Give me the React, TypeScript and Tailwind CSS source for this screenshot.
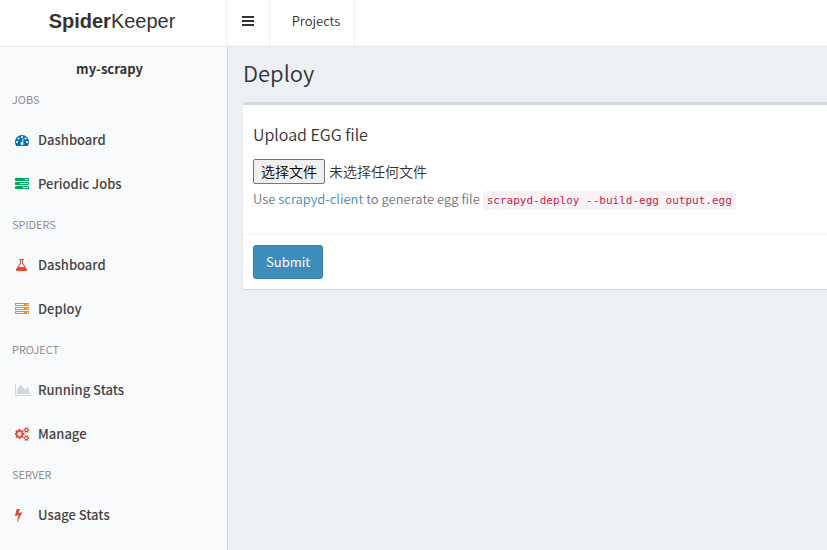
import { useRef, useState } from "react";
import type { ReactNode } from "react";

interface IconDef {
  viewBox: string;
  size: string;
  path: string;
}

interface NavItem {
  label: string;
  icon: IconDef;
  color: string;
}

const SMALL_COG =
  "v140q0 16-149 31-12 27-30 52 51 113 51 138 0 4-4 7-122 71-124 71-8 0-46-47t-52-68q-20 2-30 2t-30-2q-14 21-52 68t-46 47q-2 0-124-71-4-3-4-7 0-25 51-138-18-25-30-52-149-15-149-31v-140q0-16 149-31 13-29 30-52-51-113-51-138 0-4 4-7 4-2 35-20t59-34 30-16q8 0 46 46.5t52 67.5q20-2 30-2t30 2q51-71 92-112l6-2q4 0 124 70 4 3 4 7 0 25-51 138 17 23 30 52 149 15 149 31z";

const ICONS: Record<string, IconDef> = {
  dashboard: {
    viewBox: "0 0 1792 1792",
    size: "w-[14px]",
    path: "M384 1152q0-53-37.5-90.5t-90.5-37.5-90.5 37.5-37.5 90.5 37.5 90.5 90.5 37.5 90.5-37.5 37.5-90.5zm192-448q0-53-37.5-90.5t-90.5-37.5-90.5 37.5-37.5 90.5 37.5 90.5 90.5 37.5 90.5-37.5 37.5-90.5zm428 481l101-382q6-26-7.5-48.5t-38.5-29.5-48 6.5-30 39.5l-101 382q-60 5-107 43.5t-63 98.5q-20 77 20 146t117 89 146-20 89-117q16-60-6-117t-72-91zm660-33q0-53-37.5-90.5t-90.5-37.5-90.5 37.5-37.5 90.5 37.5 90.5 90.5 37.5 90.5-37.5 37.5-90.5zm-640-640q0-53-37.5-90.5t-90.5-37.5-90.5 37.5-37.5 90.5 37.5 90.5 90.5 37.5 90.5-37.5 37.5-90.5zm448 192q0-53-37.5-90.5t-90.5-37.5-90.5 37.5-37.5 90.5 37.5 90.5 90.5 37.5 90.5-37.5 37.5-90.5zm320 448q0 261-141 483-19 29-54 29h-1402q-35 0-54-29-141-221-141-483 0-182 71-348t191-286 286-191 348-71 348 71 286 191 191 286 71 348z",
  },
  tasks: {
    viewBox: "0 0 1792 1792",
    size: "w-[14px]",
    path: "M1024 1408h640v-128h-640v128zm-384-512h1024v-128h-1024v128zm640-512h384v-128h-384v128zm512 832v256q0 26-19 45t-45 19h-1664q-26 0-45-19t-19-45v-256q0-26 19-45t45-19h1664q26 0 45 19t19 45zm0-512v256q0 26-19 45t-45 19h-1664q-26 0-45-19t-19-45v-256q0-26 19-45t45-19h1664q26 0 45 19t19 45zm0-512v256q0 26-19 45t-45 19h-1664q-26 0-45-19t-19-45v-256q0-26 19-45t45-19h1664q26 0 45 19t19 45z",
  },
  flask: {
    viewBox: "64 0 1664 1792",
    size: "w-[13px]",
    path: "M1591 1448q56 89 21.5 152.5t-140.5 63.5h-1152q-106 0-140.5-63.5t21.5-152.5l503-793v-399h-64q-26 0-45-19t-19-45 19-45 45-19h512q26 0 45 19t19 45-19 45-45 19h-64v399zm-779-725l-272 429h712l-272-429-20-31v-436h-128v436z",
  },
  server: {
    viewBox: "0 0 1792 1792",
    size: "w-[14px]",
    path: "M128 1408h1024v-128h-1024v128zm0-512h1024v-128h-1024v128zm1568 448q0-40-28-68t-68-28-68 28-28 68 28 68 68 28 68-28 28-68zm-1568-960h1024v-128h-1024v128zm1568 448q0-40-28-68t-68-28-68 28-28 68 28 68 68 28 68-28 28-68zm0-512q0-40-28-68t-68-28-68 28-28 68 28 68 68 28 68-28 28-68zm96 832v384h-1792v-384h1792zm0-512v384h-1792v-384h1792zm0-512v384h-1792v-384h1792z",
  },
  areaChart: {
    viewBox: "0 0 2048 1792",
    size: "w-[16px]",
    path: "M2048 1536v128h-2048v-1536h128v1408h1920zm-384-1024l256 896h-1664v-576l448-576 576 576z",
  },
  cogs: {
    viewBox: "0 0 1920 1792",
    size: "w-[15px]",
    path:
      "M832 896q0-106-75-181t-181-75-181 75-75 181 75 181 181 75 181-75 75-181zm768 512q0-52-38-90t-90-38-90 38-38 90q0 53 37.5 90.5t90.5 37.5 90.5-37.5 37.5-90.5zm0-1024q0-52-38-90t-90-38-90 38-38 90q0 53 37.5 90.5t90.5 37.5 90.5-37.5 37.5-90.5zm-384 421v185q0 10-7 19.5t-16 10.5l-155 24q-11 35-32 76 34 48 90 115 7 11 7 20 0 12-7 19-23 30-82.5 89.5t-78.5 59.5q-11 0-21-7l-115-90q-37 19-77 31-11 108-23 155-7 24-30 24h-186q-11 0-20-7.5t-10-17.5l-23-153q-34-10-75-31l-118 89q-7 7-20 7-11 0-21-8-144-133-144-160 0-9 7-19 10-14 41-53t47-61q-23-44-35-82l-152-24q-10-1-17-9.5t-7-19.5v-185q0-10 7-19.5t16-10.5l155-24q11-35 32-76-34-48-90-115-7-11-7-20 0-12 7-20 22-30 82-89t79-59q11 0 21 7l115 90q34-18 77-32 11-108 23-154 7-24 30-24h186q11 0 20 7.5t10 17.5l23 153q34 10 75 31l118-89q8-7 20-7 11 0 21 8 144 133 144 160 0 8-7 19-12 16-42 54t-45 60q23 48 34 82l152 23q10 2 17 10.5t7 19.5z" +
      "m640 533" +
      SMALL_COG +
      "m0-1024" +
      SMALL_COG,
  },
  bolt: {
    viewBox: "448 0 896 1792",
    size: "w-[7px]",
    path: "M1333 566q18 20 7 44l-540 1157q-13 25-42 25-4 0-14-2-17-5-25.5-19t-4.5-30l197-808-406 101q-4 1-12 1-18 0-31-11-18-15-13-39l201-825q4-16 16-26t28-10h328q19 0 32 12.5t13 29.5q0 8-5 18l-171 463 396-98q8-2 12-2 19 0 34 15z",
  },
  bars: {
    viewBox: "0 0 1536 1792",
    size: "w-[12px]",
    path: "M0 256h1536v256h-1536zM0 768h1536v256h-1536zM0 1280h1536v256h-1536z",
  },
};

const NAV_SECTIONS: { title: string; items: NavItem[] }[] = [
  {
    title: "JOBS",
    items: [
      { label: "Dashboard", icon: ICONS.dashboard, color: "text-[#0073b7]" },
      { label: "Periodic Jobs", icon: ICONS.tasks, color: "text-[#00a65a]" },
    ],
  },
  {
    title: "SPIDERS",
    items: [
      { label: "Dashboard", icon: ICONS.flask, color: "text-[#dd4b39]" },
      { label: "Deploy", icon: ICONS.server, color: "text-[#ff851b]" },
    ],
  },
  {
    title: "PROJECT",
    items: [
      { label: "Running Stats", icon: ICONS.areaChart, color: "text-[#d2d6de]" },
      { label: "Manage", icon: ICONS.cogs, color: "text-[#dd4b39]" },
    ],
  },
  {
    title: "SERVER",
    items: [{ label: "Usage Stats", icon: ICONS.bolt, color: "text-[#dd4b39]" }],
  },
];

function Icon({ icon }: { icon: IconDef }) {
  return (
    <svg viewBox={icon.viewBox} className={`h-[14px] ${icon.size}`} fill="currentColor" aria-hidden="true">
      <path d={icon.path} />
    </svg>
  );
}

function Header() {
  return (
    <header className="flex h-[47px] border-b border-[#e4e6ea] bg-white">
      <a
        href="#"
        className="flex w-[227px] shrink-0 items-center justify-center border-r border-[#eeeeee] pb-1 pr-0.5 font-['Liberation_Sans',Arial,sans-serif] text-[20px] text-[#333333]"
      >
        <b>Spider</b>Keeper
      </a>
      <button
        type="button"
        aria-label="Toggle navigation"
        className="flex w-[43px] items-center justify-center border-r border-[#eeeeee] pb-1 text-[#333333]"
      >
        <Icon icon={ICONS.bars} />
      </button>
      <nav className="flex">
        <a href="#" className="flex w-[85px] items-center justify-center border-r border-[#eeeeee] pb-1 pl-2">
          Projects
        </a>
      </nav>
    </header>
  );
}

function Sidebar() {
  return (
    <aside className="w-[228px] shrink-0 border-r border-[#d2d6de] bg-[#f9fafc]">
      <p className="pt-3 pr-2 text-center font-bold leading-5 text-[#333333]">my-scrapy</p>
      <nav className="mt-0.5">
        {NAV_SECTIONS.map((section) => (
          <section key={section.title}>
            <h2 className="flex h-[37px] items-center pl-3 text-[11px] text-[#848484]">{section.title}</h2>
            <ul>
              {section.items.map((item) => (
                <li key={item.label}>
                  <a href="#" className="flex h-11 items-center pl-[15px] font-medium text-[#444444]">
                    <span className={`w-[23px] ${item.color}`}>
                      <Icon icon={item.icon} />
                    </span>
                    {item.label}
                  </a>
                </li>
              ))}
            </ul>
          </section>
        ))}
      </nav>
    </aside>
  );
}

function Box({ children, footer }: { children: ReactNode; footer: ReactNode }) {
  return (
    <div className="rounded-l-[3px] border-t-[3px] border-[#d2d6de] bg-white shadow-[0_1px_1px_rgba(0,0,0,0.1)]">
      <div className="px-[10px] pt-[19px] pb-[23px]">{children}</div>
      <div className="border-t border-[#f4f4f4] p-[10px]">{footer}</div>
    </div>
  );
}

export default function App() {
  const fileInput = useRef<HTMLInputElement>(null);
  const [fileName, setFileName] = useState("");

  return (
    <div className="flex min-h-screen flex-col bg-[#ecf0f5] font-['Noto_Sans_CJK_SC',sans-serif] text-[13px] font-[350] text-[#333333]">
      <Header />
      <div className="flex flex-1">
        <Sidebar />
        <main className="min-w-0 flex-1 pl-[15px] pt-[10px]">
          <h1 className="mb-[14px] text-[22px] leading-[31px]">Deploy</h1>
          <form onSubmit={(e) => e.preventDefault()}>
            <Box
              footer={
                <button
                  type="submit"
                  className="h-[34px] rounded-[3px] border border-[#367fa9] bg-[#3c8dbc] px-3 font-normal text-white"
                >
                  Submit
                </button>
              }
            >
              <label htmlFor="egg" className="block text-[16px] leading-5">
                Upload EGG file
              </label>
              <div className="mt-[15px] flex items-center gap-1 text-[14px] leading-5">
                <input
                  ref={fileInput}
                  id="egg"
                  type="file"
                  className="hidden"
                  onChange={(e) => setFileName(e.target.files?.[0]?.name ?? "")}
                />
                <button
                  type="button"
                  onClick={() => fileInput.current?.click()}
                  className="h-[25px] rounded-[2px] border border-[#767676] bg-[#efefef] px-[7px] pb-0.5 text-black"
                >
                  选择文件
                </button>
                <span className="pb-0.5">{fileName || "未选择任何文件"}</span>
              </div>
              <p className="mt-[5px] leading-5 text-[#737373]">
                Use{" "}
                <a href="#" className="text-[#3c8dbc]">
                  scrapyd-client
                </a>{" "}
                to generate egg file{" "}
                <code className="rounded-[4px] bg-[#f9f2f4] px-1 py-[3px] font-['DejaVu_Sans_Mono',monospace] text-[11px] text-[#c7254e]">
                  scrapyd-deploy --build-egg output.egg
                </code>
              </p>
            </Box>
          </form>
        </main>
      </div>
    </div>
  );
}
